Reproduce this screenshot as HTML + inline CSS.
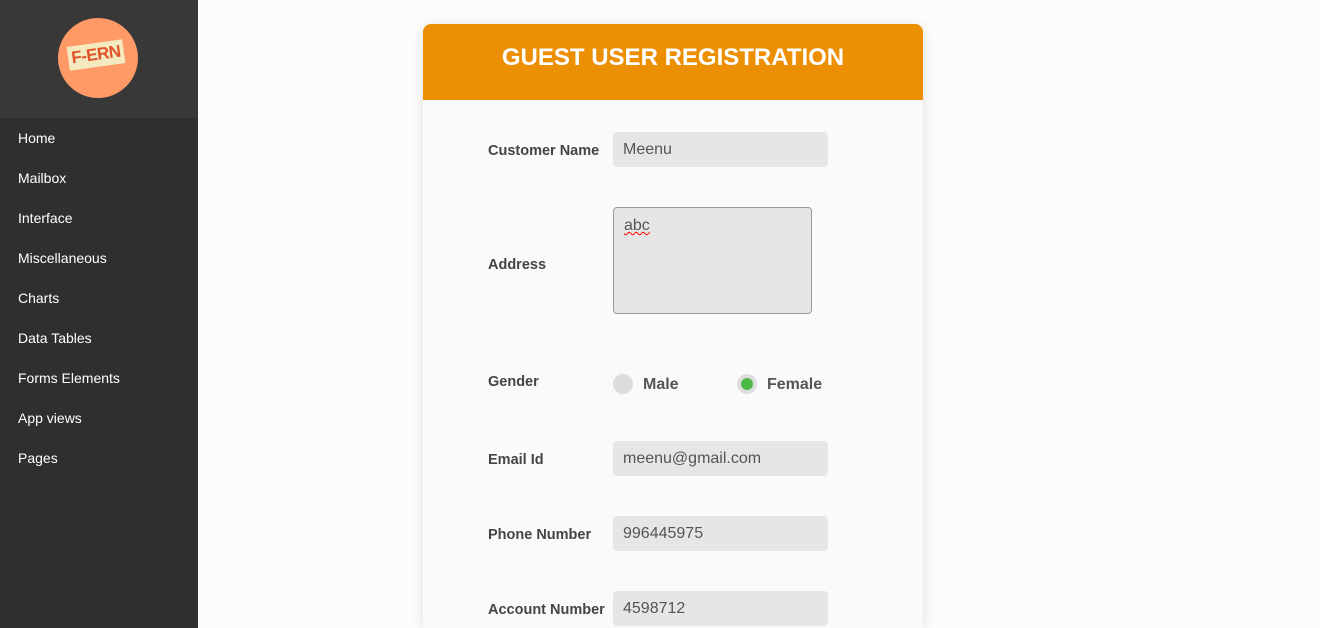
<!DOCTYPE html>
<html style="overflow:hidden;height:628px"><head><style>
body{margin:0;width:1320px;height:628px;overflow:hidden;background:#fdfcfb;font-family:"Liberation Sans",Arial,sans-serif;position:relative}
.sb{position:absolute;left:0;top:0;width:198px;height:628px;background:#2f2f2f}
.lg{height:118px;background:#383838;position:relative}
.circ{position:absolute;left:58px;top:18px;width:80px;height:80px;border-radius:50%;background:#ff9966}
.tag{position:absolute;left:10px;top:25px;width:56px;height:24px;background:#f4e9bf;transform:rotate(-8deg);color:#e0532a;font-weight:bold;font-size:17px;line-height:24px;text-align:center;letter-spacing:-0.5px}
.nav a{display:block;color:#fff;font-size:14px;padding-left:18px;height:40px;line-height:40px;text-decoration:none}
.card{position:absolute;left:423px;top:24px;width:500px;height:604px;background:#f9fafb;border-radius:8px 8px 0 0;box-shadow:0 2px 12px rgba(0,0,0,.12);overflow:hidden}
.hd{height:76px;background:#ec8f03;color:#fff;font-weight:bold;font-size:24px;text-align:center;line-height:68px}
.lb{position:absolute;left:65px;font-size:14.5px;font-weight:bold;color:#444}
.in{position:absolute;left:190px;width:205px;height:35px;background:#e6e6e6;border-radius:4px;font-size:16px;color:#555;padding-left:10px;line-height:36px}
.ta{position:absolute;left:190px;top:183px;width:199px;height:107px;box-sizing:border-box;background:#e6e6e6;border:1px solid #999;border-radius:4px;font-size:16px;color:#555;padding:9px 0 0 10px}
.r{position:absolute;width:20px;height:20px;border-radius:50%;background:#ddd}
.rl{position:absolute;font-size:16px;font-weight:bold;color:#555}
</style></head><body>
<div class="sb"><div class="lg"><div class="circ"><div class="tag">F-ERN</div></div></div>
<div class="nav"><a>Home</a><a>Mailbox</a><a>Interface</a><a>Miscellaneous</a><a>Charts</a><a>Data Tables</a><a>Forms Elements</a><a>App views</a><a>Pages</a></div></div>
<div class="card"><div class="hd">GUEST USER REGISTRATION</div>
<div class="lb" style="top:119px">Customer Name</div><div class="in" style="top:108px">Meenu</div>
<div class="lb" style="top:233px">Address</div><div class="ta"><span style="text-decoration:underline wavy red;text-decoration-thickness:1px">abc</span></div>
<div class="lb" style="top:350px">Gender</div>
<div class="r" style="left:190px;top:350px"></div><div class="rl" style="left:220px;top:352px">Male</div>
<div class="r" style="left:314px;top:350px"><div style="position:absolute;left:4px;top:4px;width:12px;height:12px;border-radius:50%;background:#4db848"></div></div><div class="rl" style="left:344px;top:352px">Female</div>
<div class="lb" style="top:428px">Email Id</div><div class="in" style="top:417px">meenu@gmail.com</div>
<div class="lb" style="top:503px">Phone Number</div><div class="in" style="top:492px">996445975</div>
<div class="lb" style="top:578px">Account Number</div><div class="in" style="top:567px">4598712</div>
</div>
</body></html>
